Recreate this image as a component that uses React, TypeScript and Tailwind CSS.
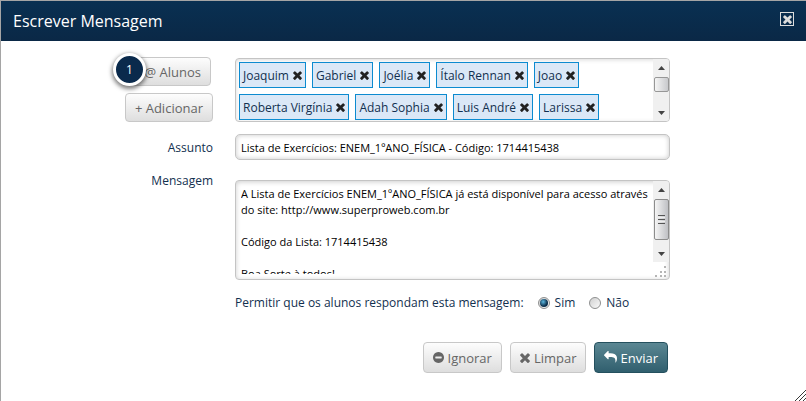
import { useState } from 'react';
import type { ReactNode } from 'react';

const TIMES =
  'M1490 1322q0 40-28 68l-136 136q-28 28-68 28t-68-28l-294-294-294 294q-28 28-68 28t-68-28l-136-136q-28-28-28-68t28-68l294-294-294-294q-28-28-28-68t28-68l136-136q28-28 68-28t68 28l294 294 294-294q28-28 68-28t68 28l136 136q28 28 28 68t-28 68l-294 294 294 294q28 28 28 68z';
const MINUS_CIRCLE =
  'M1344 960v-128q0-26-19-45t-45-19h-768q-26 0-45 19t-19 45v128q0 26 19 45t45 19h768q26 0 45-19t19-45zm320-64q0 209-103 385.5t-279.5 279.5-385.5 103-385.5-103-279.5-279.5-103-385.5 103-385.5 279.5-279.5 385.5-103 385.5 103 279.5 279.5 103 385.5z';
const ARROW_RIGHT_CURVED =
  'M1792 640q0 26-19 45l-512 512q-19 19-45 19t-45-19-19-45v-256h-224q-98 0-175.5 6t-154 21.5-133 42.5-105.5 69.5-80 101-48.5 138.5-17.5 181q0 55 5 123 0 6 2.5 23.5t2.5 26.5q0 15-8.5 25t-23.5 10q-16 0-28-17-7-9-13-22t-13.5-30-10.5-24q-127-285-127-451 0-199 53-333 162-403 875-403h224v-256q0-26 19-45t45-19 45 19l512 512q19 19 19 45z';

function Icon({ d, viewBox, className }: { d: string; viewBox: string; className: string }) {
  return (
    <svg viewBox={viewBox} className={className} fill="currentColor" aria-hidden="true">
      <path d={d} />
    </svg>
  );
}

const TIMES_BOX = '302 334 1188 1220';

function GrayButton({ children, className }: { children: ReactNode; className: string }) {
  return (
    <button
      type="button"
      className={`flex items-center rounded-[4px] border border-[#c8c8c8] bg-linear-to-b from-[#fdfdfd] to-[#dedede] text-[13px] leading-4 whitespace-nowrap text-[#666] ${className}`}
    >
      {children}
    </button>
  );
}

function Arrow({ down = false }: { down?: boolean }) {
  return (
    <svg viewBox="0 0 7 4" className="h-1 w-[7px] shrink-0" fill="#444" aria-hidden="true">
      <path d={down ? 'M0 0h7L3.5 4z' : 'M0 4h7L3.5 0z'} />
    </svg>
  );
}

const recipients = [
  'Joaquim',
  'Gabriel',
  'Joélia',
  'Ítalo Rennan',
  'Joao',
  'Roberta Virgínia',
  'Adah Sophia',
  'Luis André',
  'Larissa',
];

const initialMessage = `A Lista de Exercícios ENEM_1ºANO_FÍSICA já está disponível para acesso através do site: http://www.superproweb.com.br

Código da Lista: 1714415438

Boa Sorte à todos!`;

const radioClass =
  "grid size-3 appearance-none place-items-center rounded-full border border-[#8e8f8f] bg-linear-to-br from-[#d0d0d0] to-[#fafafa] checked:before:size-2 checked:before:rounded-full checked:before:bg-radial-[at_40%_35%] checked:before:from-[#5cb8e0] checked:before:to-[#0b2f4c] checked:before:to-60% checked:before:content-['']";

export default function App() {
  const [subject, setSubject] = useState('Lista de Exercícios: ENEM_1ºANO_FÍSICA - Código: 1714415438');
  const [message, setMessage] = useState(initialMessage);
  const [reply, setReply] = useState('sim');

  return (
    <div
      role="dialog"
      aria-labelledby="title"
      className="relative flex min-h-screen flex-col border-t border-l border-[#a5a5a5] bg-white font-['Open_Sans','Noto_Sans',sans-serif] text-xs text-[#12304f]"
    >
      <header className="flex h-10 items-center justify-between bg-linear-to-b from-[#093052] to-[#0a2846] px-3">
        <h1 id="title" className="text-base leading-5 text-white">
          Escrever Mensagem
        </h1>
        <button
          type="button"
          aria-label="Fechar"
          className="mb-1 grid size-[14px] place-items-center border border-[#dcdcdc] text-[#dcdcdc]"
        >
          <Icon d={TIMES} viewBox={TIMES_BOX} className="size-[9px]" />
        </button>
      </header>

      <form
        className="grid grid-cols-[212px_minmax(0,1fr)] gap-x-[22px] pt-4 pr-[136px]"
        onSubmit={(e) => e.preventDefault()}
      >
        <div className="flex flex-col items-end gap-[7px]">
          <div className="relative mr-[2px]">
            <GrayButton className="h-[29px] w-[90px] justify-end pr-[9px]">@ Alunos</GrayButton>
            <span className="absolute -top-1 -left-2 grid size-[33px] place-items-center rounded-full border-[3px] border-white bg-[#0a2a4c] text-xs text-white shadow-[0_2px_4px_1px_rgba(0,0,0,0.5)]">
              1
            </span>
          </div>
          <GrayButton className="h-[29px] px-[9px]">+ Adicionar</GrayButton>
        </div>
        <div className="mt-px flex h-16 overflow-hidden rounded-[4px] border border-[#c4c4c4] shadow-[inset_0_1px_4px_rgba(0,0,0,0.15)]">
          <ul className="flex min-w-0 flex-1 flex-wrap content-start gap-[6px] p-[3px]">
            {recipients.map((name) => (
              <li
                key={name}
                className="flex h-[26px] items-center gap-1 border border-[#0c8bd0] bg-[#dbe8f7] px-[3px] pt-px whitespace-nowrap"
              >
                {name}
                <button type="button" aria-label={`Remover ${name}`} className="text-[#222]">
                  <Icon d={TIMES} viewBox={TIMES_BOX} className="size-[9px]" />
                </button>
              </li>
            ))}
          </ul>
          <div className="flex w-4 flex-col items-center bg-[#f0f0f0] pt-[7px] pb-[6px]">
            <Arrow />
            <div className="mt-[7px] mb-auto h-[15px] w-[15px] rounded-[2px] border border-[#979797] bg-linear-to-r from-[#f5f5f5] to-[#c8c9cc]" />
            <Arrow down />
          </div>
        </div>

        <label htmlFor="subject" className="mt-[18px] text-right leading-4">
          Assunto
        </label>
        <input
          id="subject"
          type="text"
          value={subject}
          onChange={(e) => setSubject(e.target.value)}
          className="mt-3 h-[26px] w-full rounded-[5px] border border-[#c4c4c4] px-[5px] text-[11px] text-black shadow-[inset_0_0_5px_rgba(0,0,0,0.22)] outline-none"
        />

        <label htmlFor="message" className="mt-[13px] text-right leading-4">
          Mensagem
        </label>
        <div className="mt-5 flex h-[100px] overflow-hidden rounded-[4px] border border-[#c4c4c4] shadow-[inset_0_1px_5px_rgba(0,0,0,0.2)]">
          <textarea
            id="message"
            value={message}
            onChange={(e) => setMessage(e.target.value)}
            className="my-[5px] ml-[5px] min-w-0 flex-1 resize-none overflow-hidden text-[11px] leading-4 text-black outline-none"
          />
          <div className="flex w-4 flex-col items-center">
            <div className="flex h-[81px] w-full flex-col items-center bg-[#f0f0f0] pt-[7px] pb-[6px]">
              <Arrow />
              <div className="mt-[7px] mb-auto flex h-[41px] w-[15px] flex-col items-center justify-center gap-px rounded-[2px] border border-[#8c8c8c] bg-linear-to-r from-[#f5f5f5] to-[#bfc0c4]">
                <span className="h-px w-[7px] bg-[#555]" />
                <span className="h-px w-[7px] bg-[#eee]" />
                <span className="h-px w-[7px] bg-[#555]" />
                <span className="h-px w-[7px] bg-[#eee]" />
                <span className="h-px w-[7px] bg-[#555]" />
              </div>
              <Arrow down />
            </div>
            <svg viewBox="0 0 12 12" className="mt-1 size-3" fill="#b5b5b5" aria-hidden="true">
              <path d="M9 0h2v2H9zM5 5h2v2H5zM9 5h2v2H9zM0 9h2v2H0zM5 9h2v2H5zM9 9h2v2H9z" />
            </svg>
          </div>
        </div>

        <fieldset className="col-start-2 mt-[15px] flex h-4 items-center whitespace-nowrap">
          <legend className="float-left mr-[14px] leading-4">Permitir que os alunos respondam esta mensagem:</legend>
          <label className="mr-[14px] flex items-center gap-[5px]">
            <input
              type="radio"
              name="reply"
              value="sim"
              checked={reply === 'sim'}
              onChange={() => setReply('sim')}
              className={radioClass}
            />
            Sim
          </label>
          <label className="flex items-center gap-[5px]">
            <input
              type="radio"
              name="reply"
              value="nao"
              checked={reply === 'nao'}
              onChange={() => setReply('nao')}
              className={radioClass}
            />
            Não
          </label>
        </fieldset>

        <div className="col-start-2 mt-[31px] mr-[2px] flex justify-end gap-2">
          <GrayButton className="h-[31px] gap-1 px-[9px]">
            <Icon d={MINUS_CIRCLE} viewBox="128 128 1536 1536" className="size-[11px]" />
            Ignorar
          </GrayButton>
          <GrayButton className="h-[31px] gap-1 px-[9px]">
            <Icon d={TIMES} viewBox={TIMES_BOX} className="size-[10px]" />
            Limpar
          </GrayButton>
          <button
            type="submit"
            className="flex h-[31px] items-center gap-[3px] rounded-[4px] border border-[#24505e] bg-linear-to-b from-[#5b8793] to-[#305f6e] px-[9px] text-[13px] leading-4 text-white"
          >
            <svg viewBox="0 128 1792 1536" className="mb-px h-3 w-[13px]" fill="currentColor" aria-hidden="true">
              <path d={ARROW_RIGHT_CURVED} transform="matrix(-1 0 0 1 1792 0)" />
            </svg>
            Enviar
          </button>
        </div>
      </form>

      <svg
        viewBox="0 0 11 11"
        className="absolute right-0 bottom-0 size-[11px]"
        stroke="#222"
        strokeWidth="0.9"
        aria-hidden="true"
      >
        <path d="M0 11L11 0M4 11L11 4M8 11L11 8" />
      </svg>
    </div>
  );
}
